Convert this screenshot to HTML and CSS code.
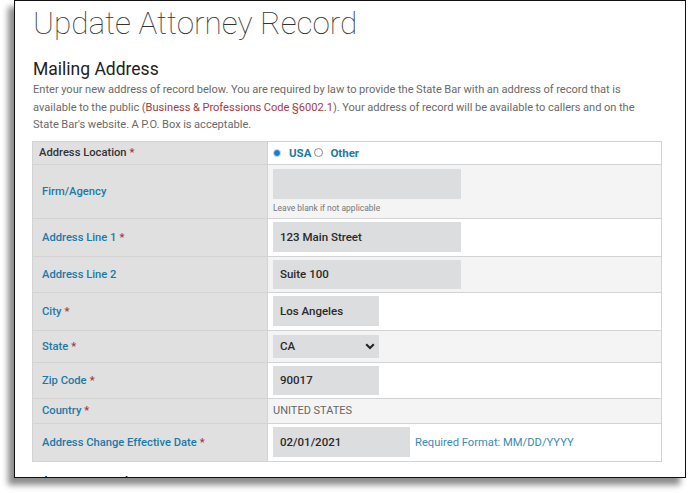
FILE: index.html
```html
<!DOCTYPE html>
<html>
<head>
<meta charset="utf-8">
<link rel="stylesheet" href="styles.css">
</head>
<body>
<div class="frame">
  <div class="page">
    <h1 class="title">Update Attorney Record</h1>
    <h2 class="section">Mailing Address</h2>
    <p class="intro">Enter your new address of record below. You are required by law to provide the State Bar with an address of record that is available to the public (<a class="law">Business &amp; Professions Code §6002.1</a>). Your address of record will be available to callers and on the State Bar's website. A P.O. Box is acceptable.</p>
    <div class="table">
      <div class="row h23">
        <div class="lbl dark">Address Location <span class="req">*</span></div>
        <div class="val white">
          <span class="radio on"></span><span class="opt">USA</span><span class="radio off"></span><span class="opt">Other</span>
        </div>
      </div>
      <div class="row h54">
        <div class="lbl">Firm/Agency</div>
        <div class="val alt col">
          <div class="input wide"></div>
          <div class="hint">Leave blank if not applicable</div>
        </div>
      </div>
      <div class="row h38">
        <div class="lbl">Address Line 1 <span class="req">*</span></div>
        <div class="val white"><div class="input wide">123 Main Street</div></div>
      </div>
      <div class="row h36">
        <div class="lbl">Address Line 2</div>
        <div class="val alt"><div class="input wide">Suite 100</div></div>
      </div>
      <div class="row h38">
        <div class="lbl">City <span class="req">*</span></div>
        <div class="val white"><div class="input narrow">Los Angeles</div></div>
      </div>
      <div class="row h32">
        <div class="lbl">State <span class="req">*</span></div>
        <div class="val alt">
          <div class="select">CA<svg class="chev" width="10" height="7" viewBox="0 0 10 7"><path d="M1.2 1.3 L5 5 L8.8 1.3" fill="none" stroke="#222" stroke-width="2"/></svg></div>
        </div>
      </div>
      <div class="row h36">
        <div class="lbl">Zip Code <span class="req">*</span></div>
        <div class="val white"><div class="input narrow">90017</div></div>
      </div>
      <div class="row h25">
        <div class="lbl">Country <span class="req">*</span></div>
        <div class="val alt"><span class="static">UNITED STATES</span></div>
      </div>
      <div class="row h37 last">
        <div class="lbl">Address Change Effective Date <span class="req">*</span></div>
        <div class="val white"><div class="input date">02/01/2021</div><span class="fmt">Required Format: MM/DD/YYYY</span></div>
      </div>
    </div>
    <h2 class="section next">Phone Numbers</h2>
  </div>
</div>
</body>
</html>
```

FILE: styles.css
```css
html, body {
  margin: 0;
  padding: 0;
  background: #ffffff;
}
body {
  font-family: Roboto, "Liberation Sans", sans-serif;
  width: 688px;
  height: 493px;
  overflow: hidden;
}
.frame {
  margin-left: 14px;
  width: 670px;
  height: 476px;
  border: 1.5px solid #111;
  background: #fff;
  box-shadow: -6px 7px 6px rgba(0, 0, 0, 0.45);
  overflow: hidden;
}
.page {
  padding-left: 18px;
  padding-right: 24px;
}
.title {
  margin: 0;
  padding-top: 3px;
  font-size: 31.5px;
  font-weight: 100;
  color: #333;
  line-height: 40px;
}
.section {
  margin: 13px 0 0 0;
  font-size: 17.5px;
  font-weight: 400;
  color: #222;
  line-height: 24px;
}
.intro {
  margin: 0;
  font-size: 11.1px;
  line-height: 17.5px;
  color: #6a6a6a;
  word-spacing: -0.25px;
}
.law {
  color: #a8393f;
}
.table {
  margin-top: 7px;
  margin-left: -1px;
  width: 628px;
  border: 1px solid #d3d3d3;
  border-bottom: 1.5px solid #d3d3d3;
}
.row {
  display: grid;
  grid-template-columns: 235px 1fr;
  border-bottom: 1.5px solid #d3d3d3;
  box-sizing: border-box;
}
.row.last {
  border-bottom: none;
}
.h23 { height: 23px; }
.h54 { height: 54px; }
.h38 { height: 38px; }
.h36 { height: 36px; }
.h32 { height: 32px; }
.h25 { height: 25px; }
.h37 { height: 37px; }
.lbl {
  background: #e0e0e0;
  border-right: 1px solid #d3d3d3;
  display: flex;
  align-items: center;
  padding-left: 9px;
  font-size: 11.2px;
  font-weight: 500;
  color: #1b7aa6;
}
.lbl.dark {
  color: #333;
  padding-left: 6px;
}
.req {
  color: #a03a3e;
  margin-left: 3px;
}
.val {
  display: flex;
  align-items: center;
  padding-left: 5px;
}
.val.col {
  flex-direction: column;
  align-items: flex-start;
  justify-content: flex-start;
  padding-top: 4px;
}
.white { background: #fff; }
.alt { background: #f4f4f4; }
.radio {
  border-radius: 50%;
  box-sizing: border-box;
}
.radio.on {
  border: 1.5px solid #cfe0f5;
  background: #1e78d6;
  width: 8px;
  height: 8px;
  margin-right: 8px;
}
.radio.off {
  border: 1px solid #8a8a8a;
  background: #fff;
  width: 9px;
  height: 9px;
  margin-left: 3px;
  margin-right: 7px;
}
.opt {
  font-size: 11.5px;
  font-weight: 700;
  color: #1b7aa6;
}
.input {
  height: 30px;
  background: #dcdddf;
  box-sizing: border-box;
  display: flex;
  align-items: center;
  padding-left: 7px;
  font-size: 11.5px;
  font-weight: 500;
  color: #2a2a2a;
}
.wide { width: 188px; }
.narrow { width: 106px; }
.date { width: 137px; }
.h36 .input { height: 29px; }
.hint {
  font-size: 8.5px;
  color: #777;
  margin-top: 4px;
}
.select {
  width: 106px;
  height: 23px;
  background: #dcdddf;
  box-sizing: border-box;
  display: flex;
  align-items: center;
  justify-content: space-between;
  padding: 0 4px 0 7px;
  font-size: 11.5px;
  font-weight: 500;
  color: #2a2a2a;
}
.static {
  font-size: 11px;
  color: #666;
}
.fmt {
  font-size: 11.2px;
  color: #3a8ab8;
  margin-left: 5px;
}
.section.next {
  margin-top: 10px;
}
```
